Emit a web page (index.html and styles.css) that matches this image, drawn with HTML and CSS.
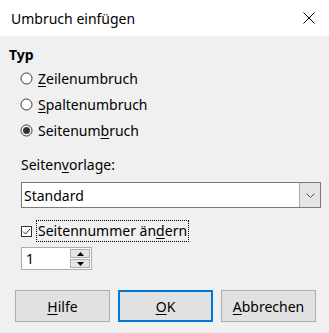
FILE: index.html
```html
<!DOCTYPE html>
<html lang="de">

<head>
    <meta charset="UTF-8">
    <title>Umbruch einfügen</title>
    <link rel="stylesheet" href="styles.css">
</head>

<body>
    <div class="titlebar">
        <span class="title">Umbruch einfügen</span>
        <svg class="close" width="12" height="12" viewBox="0 0 12 12">
            <path d="M0.5 0.5 L11.5 11.5 M11.5 0.5 L0.5 11.5" stroke="#000" stroke-width="1" fill="none"/>
        </svg>
    </div>

    <div class="content">
        <div class="group-title">Typ</div>
        <div class="radios">
            <div class="radio-row">
                <svg class="radio" width="13" height="13" viewBox="0 0 13 13">
                    <circle cx="6.5" cy="6.5" r="5.5" fill="#fff" stroke="#333"/>
                </svg>
                <span><u>Z</u>eilenumbruch</span>
            </div>
            <div class="radio-row">
                <svg class="radio" width="13" height="13" viewBox="0 0 13 13">
                    <circle cx="6.5" cy="6.5" r="5.5" fill="#fff" stroke="#333"/>
                </svg>
                <span><u>S</u>paltenumbruch</span>
            </div>
            <div class="radio-row">
                <svg class="radio" width="13" height="13" viewBox="0 0 13 13">
                    <circle cx="6.5" cy="6.5" r="5.5" fill="#fff" stroke="#333"/>
                    <circle cx="6.5" cy="6.5" r="3.5" fill="#333"/>
                </svg>
                <span>Seitenum<u>b</u>ruch</span>
            </div>
        </div>

        <div class="field-label">Seiten<u>v</u>orlage:</div>
        <div class="select">
            <span class="select-value">Standard</span>
            <span class="select-button">
                <svg width="9" height="5" viewBox="0 0 9 5">
                    <path d="M0.5 0.5 L4.5 4.5 L8.5 0.5" stroke="#555" fill="none"/>
                </svg>
            </span>
        </div>

        <div class="check-row">
            <svg class="checkbox" width="11" height="11" viewBox="0 0 11 11">
                <rect x="0.5" y="0.5" width="10" height="10" fill="#fff" stroke="#333"/>
                <path d="M2 5.5 L4.5 8 L9 3" stroke="#333" fill="none"/>
            </svg>
            <span class="focus">Seitennummer än<u>d</u>ern</span>
        </div>

        <div class="spin">
            <span class="spin-value">1</span>
            <span class="spin-buttons">
                <span class="spin-btn">
                    <svg width="7" height="4" viewBox="0 0 7 4"><path d="M0 4 L3.5 0 L7 4 Z" fill="#000"/></svg>
                </span>
                <span class="spin-btn">
                    <svg width="7" height="4" viewBox="0 0 7 4"><path d="M0 0 L3.5 4 L7 0 Z" fill="#000"/></svg>
                </span>
            </span>
        </div>
    </div>

    <div class="buttons">
        <button type="button"><u>H</u>ilfe</button>
        <button type="button" class="default"><u>O</u>K</button>
        <button type="button"><u>A</u>bbrechen</button>
    </div>
</body>

</html>
```

FILE: styles.css
```css
body {
    margin: 0;
    width: 329px;
    height: 333px;
    overflow: hidden;
    background-color: #f0f0f0;
    font-family: "Noto Sans", "Open Sans", sans-serif;
    font-size: 14px;
    color: #000;
}

u {
    text-decoration-thickness: 1px;
    text-underline-offset: 2px;
}

.titlebar {
    height: 36px;
    background-color: #fff;
    display: flex;
    align-items: center;
    justify-content: space-between;
    padding: 0 14px 0 11px;
}

.title {
    font-size: 14px;
}

.content {
    padding: 9px 8px 0 9px;
}

.group-title {
    font-weight: bold;
    line-height: 20px;
}

.radios {
    padding-left: 11px;
}

.radio-row {
    height: 26px;
    display: flex;
    align-items: center;
    gap: 5px;
}

.field-label {
    margin: 12px 0 7px 12px;
    line-height: 20px;
}

.select {
    margin-left: 12px;
    height: 26px;
    box-sizing: border-box;
    border: 1px solid #7a7a7a;
    background-color: #fff;
    display: flex;
    align-items: stretch;
}

.select-value {
    flex: 1;
    display: flex;
    align-items: center;
    padding-left: 2px;
}

.select-button {
    width: 20px;
    background-color: #e5e5e5;
    border-left: 1px solid #adadad;
    display: flex;
    align-items: center;
    justify-content: center;
}

.check-row {
    margin: 13px 0 0 12px;
    height: 20px;
    display: flex;
    align-items: center;
    gap: 5px;
}

.focus {
    outline: 1px dotted #000;
    line-height: 20px;
    padding: 0 1px;
}

.spin {
    margin: 6px 0 0 12px;
    width: 71px;
    height: 23px;
    box-sizing: border-box;
    border: 1px solid #adadad;
    background-color: #fff;
    display: flex;
}

.spin-value {
    flex: 1;
    padding-left: 4px;
    line-height: 21px;
}

.spin-buttons {
    width: 20px;
    display: flex;
    flex-direction: column;
    gap: 1px;
    padding: 1px 1px 1px 0;
}

.spin-btn {
    flex: 1;
    background-color: #e5e5e5;
    border: 1px solid #adadad;
    display: flex;
    align-items: center;
    justify-content: center;
}

.buttons {
    margin-top: 20px;
    padding-left: 15px;
    display: flex;
    gap: 8px;
}

button {
    width: 95px;
    height: 32px;
    box-sizing: border-box;
    background-color: #e1e1e1;
    border: 1px solid #adadad;
    font-family: inherit;
    font-size: 14px;
    color: #000;
    padding: 0;
}

button.default {
    border: 2px solid #0078d7;
}
```
